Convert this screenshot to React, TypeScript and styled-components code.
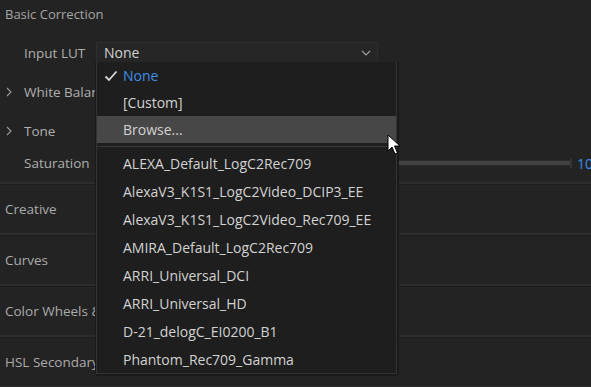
import React from "react";
import styled, { createGlobalStyle } from "styled-components";

const Global = createGlobalStyle`
  html, body { margin: 0; padding: 0; background: #232323; overflow: hidden; }
  body { font-family: "Open Sans", "Noto Sans", sans-serif; -webkit-font-smoothing: antialiased; }
  #root { width: 591px; height: 387px; overflow: hidden; position: relative; }
`;

const Panel = styled.div`
  width: 610px;
  display: flex;
  flex-direction: column;
  background: #232323;
  color: #a8a8a8;
  font-size: 13.5px;
`;

const SectionHeader = styled.div`
  height: 33px;
  padding: 5px 0 0 5px;
  box-sizing: border-box;
  line-height: 18px;
  color: #a6a6a6;
  font-size: 13px;
`;

const Rows = styled.div`
  display: flex;
  flex-direction: column;
  padding-bottom: 6px;
`;

const Row = styled.div<{ $h: number }>`
  height: ${(p) => p.$h}px;
  display: flex;
  align-items: center;
  position: relative;
`;

const Twisty = styled.span`
  width: 24px;
  padding-left: 6px;
  box-sizing: border-box;
  display: flex;
  align-items: center;
  color: #9a9a9a;
`;

const Label = styled.span`
  width: 72px;
  white-space: nowrap;
  overflow: hidden;
  color: #afafaf;
`;

const Select = styled.div`
  width: 282px;
  height: 22px;
  box-sizing: border-box;
  border: 1px solid #2e2e2e;
  background: #262626;
  display: flex;
  align-items: center;
  justify-content: space-between;
  padding: 0 6px 0 7px;
  color: #d0d0d0;
  font-size: 14px;
`;

const SliderTrack = styled.div`
  flex: 1;
  height: 4px;
  background: #424242;
  border-top: 1px solid #2a2a2a;
  border-bottom: 1px solid #2a2a2a;
  margin-right: 7px;
  position: relative;
  &::after {
    content: "";
    position: absolute;
    right: -2px;
    top: -3px;
    width: 2px;
    height: 10px;
    background: #333;
  }
`;

const Value = styled.span`
  width: 30px;
  color: #3a8de6;
  padding-right: 3px;
  font-size: 14px;
`;

const Collapsed = styled.div`
  height: 49px;
  border-top: 2px solid #2d2d2d;
  box-shadow: inset 0 1px 0 #1c1c1c;
  display: flex;
  align-items: center;
  padding-left: 5px;
  color: #ababab;
`;

const CollapsedLabel = styled.span`
  max-width: 91px;
  overflow: hidden;
  white-space: nowrap;
`;

const BottomLine = styled.div`
  border-top: 2px solid #2d2d2d;
`;

const Menu = styled.div`
  position: absolute;
  left: 96px;
  top: 62px;
  width: 299px;
  background: #1e1e1e;
  border: 1px solid #333;
  border-top: none;
  box-shadow: 2px 0 0 #1a1a1a, 0 2px 0 #1a1a1a, -1px 0 0 #1a1a1a;
  display: flex;
  flex-direction: column;
  color: #d2d2d2;
  font-size: 14px;
`;

const Item = styled.div<{ $h: number; $hl?: boolean; $sel?: boolean }>`
  height: ${(p) => p.$h}px;
  display: flex;
  align-items: center;
  padding-left: 26px;
  position: relative;
  background: ${(p) => (p.$hl ? "#474747" : "transparent")};
  color: ${(p) => (p.$sel ? "#3d8fe8" : "#d2d2d2")};
  white-space: nowrap;
`;

const Check = styled.svg`
  position: absolute;
  left: 7px;
  top: 50%;
  transform: translateY(-50%);
`;

const Sep = styled.div`
  height: 6px;
  display: flex;
  align-items: center;
  &::before {
    content: "";
    flex: 1;
    height: 1px;
    background: #3a3a3a;
  }
`;

const Cursor = styled.svg`
  position: absolute;
  left: 387px;
  top: 134px;
`;

const Chevron = () => (
  <svg width="10" height="6" viewBox="0 0 10 6">
    <path d="M1 1 L5 5 L9 1" fill="none" stroke="#a0a0a0" strokeWidth="1.1" />
  </svg>
);

const Right = () => (
  <svg width="6" height="10" viewBox="0 0 6 10">
    <path d="M1 1 L5 5 L1 9" fill="none" stroke="#9a9a9a" strokeWidth="1.1" />
  </svg>
);

const luts = [
  "ALEXA_Default_LogC2Rec709",
  "AlexaV3_K1S1_LogC2Video_DCIP3_EE",
  "AlexaV3_K1S1_LogC2Video_Rec709_EE",
  "AMIRA_Default_LogC2Rec709",
  "ARRI_Universal_DCI",
  "ARRI_Universal_HD",
  "D-21_delogC_EI0200_B1",
  "Phantom_Rec709_Gamma",
];

export default function App() {
  return (
    <>
      <Global />
      <Panel>
        <SectionHeader>Basic Correction</SectionHeader>
        <Rows>
          <Row $h={39}>
            <Twisty />
            <Label>Input LUT</Label>
            <Select>
              <span>None</span>
              <Chevron />
            </Select>
          </Row>
          <Row $h={39}>
            <Twisty>
              <Right />
            </Twisty>
            <Label>White Balance</Label>
          </Row>
          <Row $h={39}>
            <Twisty>
              <Right />
            </Twisty>
            <Label>Tone</Label>
          </Row>
          <Row $h={26}>
            <Twisty />
            <Label>Saturation</Label>
            <SliderTrack />
            <Value>100</Value>
          </Row>
        </Rows>
        <Collapsed><CollapsedLabel>Creative</CollapsedLabel></Collapsed>
        <Collapsed><CollapsedLabel>Curves</CollapsedLabel></Collapsed>
        <Collapsed><CollapsedLabel>Color Wheels &amp; Match</CollapsedLabel></Collapsed>
        <Collapsed><CollapsedLabel>HSL Secondary</CollapsedLabel></Collapsed>
        <BottomLine />
      </Panel>
      <Menu>
        <Item $h={27} $sel>
          <Check width="14" height="12" viewBox="0 0 14 12">
            <path d="M1.5 6.5 L5 10 L12.5 1.5" fill="none" stroke="#d8d8d8" strokeWidth="1.8" />
          </Check>
          None
        </Item>
        <Item $h={27}>[Custom]</Item>
        <Item $h={27} $hl>
          Browse...
        </Item>
        <Sep />
        {luts.map((l) => (
          <Item key={l} $h={28}>
            {l}
          </Item>
        ))}
      </Menu>
      <Cursor width="14" height="22" viewBox="0 0 14 22">
        <path d="M1 1 L1 17 L5 13 L8 20 L10.5 19 L7.5 12 L13 12 Z" fill="#fff" stroke="#000" strokeWidth="1" strokeLinejoin="round" />
      </Cursor>
    </>
  );
}
